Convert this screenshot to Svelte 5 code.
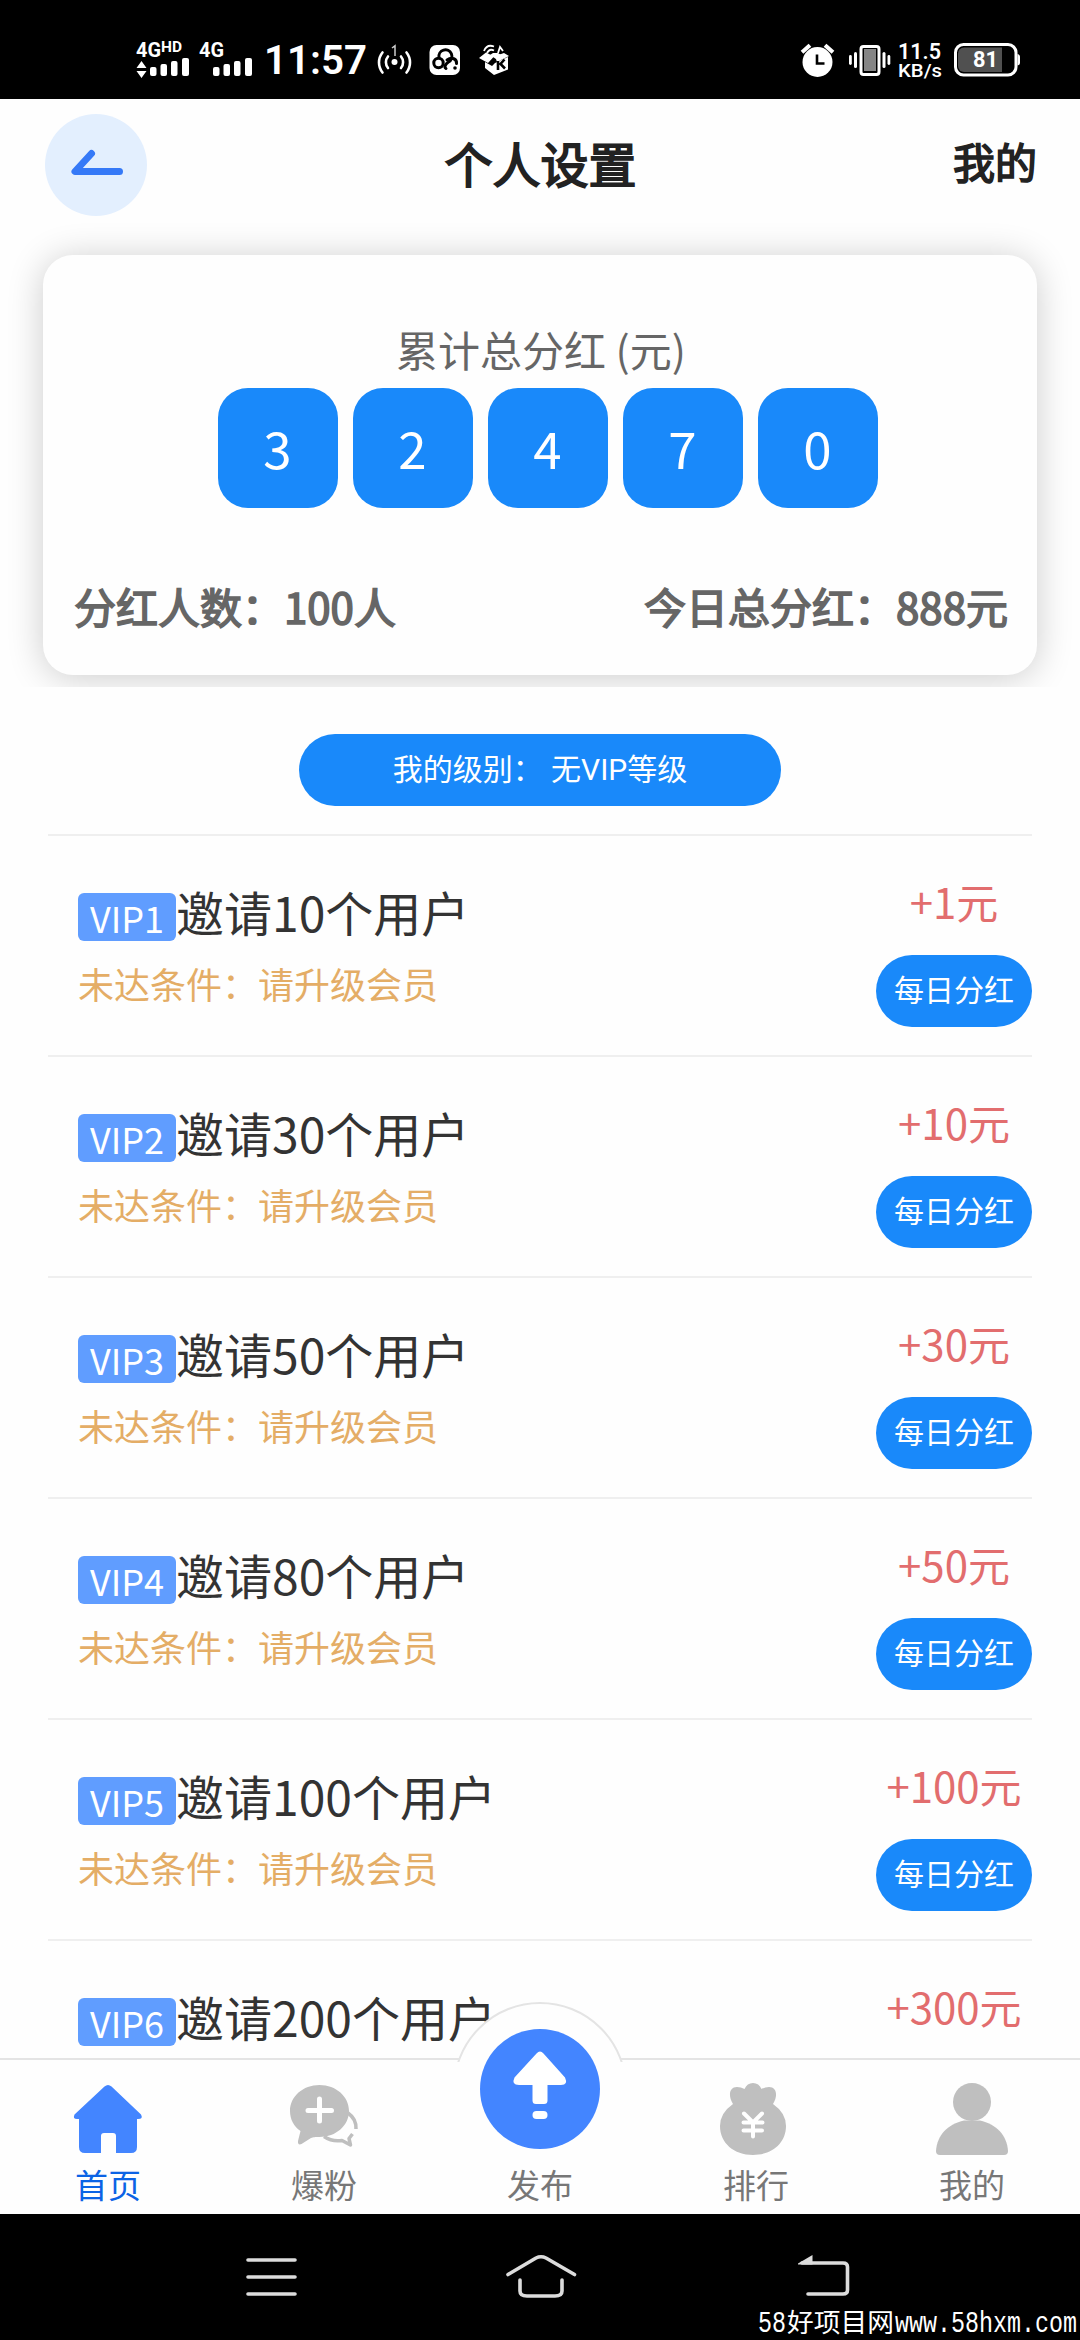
<script>
  const digits = ['3', '2', '4', '7', '0'];
  const levels = [
    { tag: 'VIP1', users: 10, bonus: 1 },
    { tag: 'VIP2', users: 30, bonus: 10 },
    { tag: 'VIP3', users: 50, bonus: 30 },
    { tag: 'VIP4', users: 80, bonus: 50 },
    { tag: 'VIP5', users: 100, bonus: 100 },
    { tag: 'VIP6', users: 200, bonus: 300 }
  ];
</script>

<div class="phone">
  <header class="status">
    <svg width="1080" height="99" viewBox="0 0 1080 99" fill="#fff">
      <text class="st b" x="136" y="57" font-size="20.5" textLength="25" lengthAdjust="spacingAndGlyphs">4G</text>
      <text class="st b" x="161" y="52" font-size="14" textLength="21" lengthAdjust="spacingAndGlyphs">HD</text>
      <path d="M141.500 61l5 7h-10zM141.500 78l5-7h-10z" />
      <rect x="150" y="67" width="6.500" height="9" rx="2" />
      <rect x="160.500" y="64" width="6.500" height="12" rx="2" />
      <rect x="171" y="61" width="6.500" height="15" rx="2" />
      <rect x="182" y="58" width="7" height="18" rx="2" />
      <text class="st b" x="199" y="57" font-size="20.5" textLength="25" lengthAdjust="spacingAndGlyphs">4G</text>
      <rect x="213" y="67" width="6.500" height="9" rx="2" />
      <rect x="223.500" y="64" width="6.500" height="12" rx="2" />
      <rect x="234" y="61" width="6.500" height="15" rx="2" />
      <rect x="245" y="58" width="7" height="18" rx="2" />
      <text class="st sb" x="264" y="74" font-size="41" textLength="103" lengthAdjust="spacingAndGlyphs">11:57</text>
      <circle cx="394.500" cy="62" r="3" />
      <path d="M392 48l3-2.200V56" fill="none" stroke="#ccc" stroke-width="1.500" />
      <g fill="none" stroke="#fff" stroke-width="2.600" stroke-linecap="round">
        <path d="M388 56.500a9 9 0 0 0 0 11.500M401 56.500a9 9 0 0 1 0 11.500M382.500 52.500a16 16 0 0 0 0 20M406.500 52.500a16 16 0 0 1 0 20" />
      </g>
      <rect x="429.500" y="45" width="30.500" height="30" rx="7" />
      <g fill="none" stroke="#000" stroke-width="3" stroke-linecap="round">
        <circle cx="438.500" cy="63" r="4.700" />
        <path d="M439 57.500a6.500 6.500 0 1 1 9.500 4.500c-2.500 1.500-5 5-2.500 6.500" />
        <path d="M447 60c5-3.500 10-1 9.500 3.500" />
      </g>
      <circle cx="455" cy="68" r="1.800" fill="#000" />
      <path d="M485 62l7 4 3-3 13-6v12.500l-14 5.500-9-7zM479 58l7-5.500 8 4-6 6.500zM495 56l9-3 5 3-12 6z" />
      <path d="M484 51c2-5 6-6 10-4.500M487 53c1.500-3 4-4 7-2.500M498 53l2-6 3 4" fill="none" stroke="#fff" stroke-width="1.800" />
      <path d="M490 55l3-2h5l3 2-5 4z" />
      <path d="M498 61v9M504.500 59.500l-4 4.500 4.500 4.500" fill="none" stroke="#000" stroke-width="2.600" />

      <circle cx="817.500" cy="62" r="15" />
      <path d="M803.500 51l5-4.500M826.500 46.500l5 4.500" stroke="#fff" stroke-width="4" stroke-linecap="square" />
      <path d="M817 54.500v9h7.500" fill="none" stroke="#000" stroke-width="2.600" />
      <rect x="861" y="46.500" width="18" height="28" rx="2.500" fill="#000" stroke="#fff" stroke-width="3" />
      <rect x="864" y="49" width="12" height="22" fill="#858585" />
      <rect x="854" y="52" width="3" height="16" rx="1.500" />
      <rect x="849" y="55" width="2.800" height="10" rx="1.400" />
      <rect x="882.500" y="52" width="3" height="16" rx="1.500" />
      <rect x="887.500" y="55" width="2.800" height="10" rx="1.400" />
      <text class="st sb" x="898" y="59" font-size="22.5" textLength="43" lengthAdjust="spacingAndGlyphs">11.5</text>
      <text class="st md" x="898" y="77" font-size="18.7" textLength="44" lengthAdjust="spacingAndGlyphs">KB/s</text>
      <rect x="955.500" y="44.500" width="60.500" height="30.500" rx="8" fill="#000" stroke="#fff" stroke-width="3" />
      <path d="M964 47.500h38v24.500h-38a6 6 0 0 1-6-6v-12.500a6 6 0 0 1 6-6z" fill="#505050" />
      <path d="M1017.500 54c2 .5 2.500 1.500 2.500 3v5.500c0 1.500-.5 2.500-2.500 3z" />
      <text class="st b" x="973" y="67" font-size="21.5" textLength="25" lengthAdjust="spacingAndGlyphs">81</text>
    </svg>
  </header>

  <main class="page">
    <section class="top">
      <div class="titlebar">
        <button class="back" aria-label="返回">
          <svg width="102" height="102" viewBox="0 0 102 102">
            <path d="M46.500 39.500L30 57.500H74.500" fill="none" stroke="#3579f7" stroke-width="7" stroke-linecap="round" stroke-linejoin="round" />
          </svg>
        </button>
        <h1>个人设置</h1>
        <span class="mine">我的</span>
      </div>
      <div class="card">
        <p class="caption">累计总分红 (元)</p>
        <div class="digits">
          {#each digits as d}<span>{d}</span>{/each}
        </div>
        <div class="stats"><span>分红人数：100人</span><span>今日总分红：888元</span></div>
      </div>
    </section>

    <div class="level">我的级别： 无VIP等级</div>

    <ul class="list">
      {#each levels as l}
        <li>
          <div class="info">
            <div class="goal"><span class="tag">{l.tag}</span><span>邀请{l.users}个用户</span></div>
            <p class="hint">未达条件：请升级会员</p>
          </div>
          <div class="reward">
            <span class="amount">+{l.bonus}元</span>
            <span class="daily">每日分红</span>
          </div>
        </li>
      {/each}
    </ul>
  </main>

  <nav class="tabs">
    <div class="bump"></div>
    <div class="tab active">
      <svg width="72" height="72" viewBox="0 0 72 72" fill="#4385ff">
        <path d="M32.500 3.500Q36 .5 39.500 3.500L69 31.500Q71.500 36 66 36H65V64Q65 70 59 70H44V53Q44 50 41 50H32Q29 50 29 53V70H13Q7 70 7 64V36H5Q.5 36 2.500 31.500Z" />
      </svg>
      <span>首页</span>
    </div>
    <div class="tab">
      <svg width="72" height="72" viewBox="0 0 72 72">
        <path d="M31.500 2C48 2 61 13.500 61 28S48 54 31.500 54C27 54 25.500 54 23 55L13.500 61Q9.500 62.500 10 58L12.500 48C6 43.500 2 36.500 2 28 2 13.500 15 2 31.500 2z" fill="#bfbfbf" />
        <path d="M31.500 16V38M20 27.500H43.500" stroke="#fff" stroke-width="5" stroke-linecap="round" />
        <path d="M60 30Q68.500 36 68 46M36 53.500Q44 59 54 57.500L62.500 62 61 55.500 64.500 51" fill="none" stroke="#bfbfbf" stroke-width="3.500" stroke-linejoin="round" stroke-linecap="butt" />
      </svg>
      <span>爆粉</span>
    </div>
    <div class="tab publish">
      <div class="disc">
        <svg width="120" height="120" viewBox="0 0 120 120" fill="#fff">
          <path d="M56.500 24.500Q60 20.500 63.500 24.500L85 48.500Q88.500 56 81 56H67.500V71.500Q67.500 75 64 75H56Q52.500 75 52.500 71.500V56H39Q31 56 34.500 48.500Z" />
          <rect x="52.500" y="82" width="15" height="8" rx="4" />
        </svg>
      </div>
      <span>发布</span>
    </div>
    <div class="tab">
      <svg class="bag" width="72" height="72" viewBox="0 0 72 72">
        <path d="M16 21C11 13 12 4 20 4Q24 4 27.500 6Q30 0 36 0T44.500 6Q48 4 52 4C60 4 61 13 56 21Q69 30 69 43C69 60 55 72 36 72S3 60 3 43Q3 30 16 21z" fill="#bfbfbf" />
        <path d="M27 30.500L36 39.500 45 30.500M36 39V53.500M26.500 39.500H45.500M26.500 47.500H45" fill="none" stroke="#fff" stroke-width="4" stroke-linecap="round" />
      </svg>
      <span>排行</span>
    </div>
    <div class="tab">
      <svg width="72" height="72" viewBox="0 0 72 72" fill="#bfbfbf">
        <circle cx="36" cy="19" r="19" />
        <path d="M28 37.500H44C60 41 71 52 72 68Q72 72 68 72H4Q0 72 0 68C1 52 12 41 28 37.500z" />
      </svg>
      <span>我的</span>
    </div>
  </nav>

  <footer class="system">
    <svg width="1080" height="126" viewBox="0 0 1080 126">
      <g fill="none" stroke="#dcdcdc" stroke-width="3.600" stroke-linecap="round" stroke-linejoin="round">
        <path d="M248 46H295M248 63H295M248 80H295" />
        <path d="M508 60.500L536 44Q541 41.500 546 44L574.500 60.500" />
        <path d="M520 66V77Q520 82 527 82H555Q562 82 562 77V66" />
        <path d="M802 49H843Q847.500 49 847.500 53V76Q847.500 80 843 80H808" />
      </g>
      <path d="M798 49.500L812.500 41V50.500H798z" fill="#dcdcdc" />
      <g fill="#fff" class="mark">
        <text class="mono" x="758" y="118" font-size="29" textLength="28" lengthAdjust="spacingAndGlyphs">58</text>
        <text class="cjk" x="787" y="118" font-size="26" textLength="107" lengthAdjust="spacingAndGlyphs">好项目网</text>
        <text class="mono" x="895" y="118" font-size="29" textLength="182" lengthAdjust="spacingAndGlyphs">www.58hxm.com</text>
      </g>
    </svg>
  </footer>
</div>

<style>
  :global(body) { margin: 0; background: #fff; }
  .phone {
    width: 1080px; height: 2340px; overflow: hidden;
    display: flex; flex-direction: column;
    font-family: "Noto Sans CJK SC", sans-serif; color: #333; background: #fefefe;
  }
  svg { display: block; }
  .status { flex: none; height: 99px; background: #000; }
  .st { font-family: Roboto, sans-serif; }
  .b { font-weight: 700; }
  .sb { font-weight: 600; }
  .md { font-weight: 500; }

  .page { flex: 1; min-height: 0; overflow: hidden; }
  .top { height: 588px; overflow: hidden; box-sizing: border-box; }
  .titlebar {
    display: grid; grid-template-columns: 1fr auto 1fr; align-items: center;
    height: 132px; padding: 0 44px 0 45px; color: #222;
  }
  .back { width: 102px; height: 102px; padding: 0; border: 0; border-radius: 50%; background: #e3effe; }
  h1 { margin: 0; padding-bottom: 6px; font-size: 48px; line-height: 66px; font-weight: 400; -webkit-text-stroke: 1.8px #222; }
  .mine { justify-self: end; font-size: 42px; line-height: 60px; -webkit-text-stroke: 1.6px #222; padding-bottom: 8px; margin-right: -1px; }

  .card {
    box-sizing: border-box; width: 994px; height: 420px; margin: 24px 43px 0;
    padding: 61px 29px 0 31px; border-radius: 30px; background: #fefefe;
    box-shadow: 0 3px 36px rgba(0, 0, 0, .2); color: #666;
  }
  .caption { margin: 0; text-align: center; font-size: 42px; line-height: 66px; }
  .digits { display: flex; justify-content: center; margin: 6px 0 0 13px; gap: 15px; }
  .digits span {
    width: 120px; height: 120px; border-radius: 30px; background: #1989fa; color: #fff;
    font-size: 51px; line-height: 119px; text-align: center;
  }
  .stats { display: flex; justify-content: space-between; margin-top: 68px; font-size: 42px; line-height: 60px; -webkit-text-stroke: 1.6px #666; }

  .level {
    width: 482px; height: 72px; margin: 47px auto 28px; border-radius: 36px;
    background: #1989fa; color: #fff; text-align: center; font-size: 30px; line-height: 71px;
    font-family: Roboto, "Noto Sans CJK SC", sans-serif; word-spacing: 1px;
  }
  .list { list-style: none; margin: 0; padding: 0 48px; }
  li {
    box-sizing: border-box; height: 221px; padding-left: 30px; border-top: 2px solid #efefef;
    display: flex; justify-content: space-between;
  }
  .goal { display: flex; margin-top: 42px; font-size: 48px; line-height: 66px; }
  .tag {
    box-sizing: border-box; width: 98px; height: 48px; margin-top: 15px; border-radius: 6px;
    background: #609dff; color: #fff; text-align: center; font-size: 36px; line-height: 48px;
  }
  .hint { margin: 12px 0 0; font-size: 36px; line-height: 54px; color: #e4ad66; }
  .reward { width: 156px; display: flex; flex-direction: column; align-items: center; }
  .amount { margin-top: 34px; height: 85px; font-size: 42px; line-height: 62px; color: #e26d6e; white-space: nowrap; }
  .daily { width: 156px; height: 72px; border-radius: 36px; background: #1989fa; color: #fff; text-align: center; font-size: 30px; line-height: 66px; }

  .tabs {
    position: relative; flex: none; box-sizing: border-box; height: 156px;
    display: flex; border-top: 2px solid #e4e4e4; background: #fefefe;
  }
  .bump {
    position: absolute; left: 453px; top: -58px; width: 174px; height: 60px; overflow: hidden;
  }
  .bump::before {
    content: ""; display: block; box-sizing: border-box; width: 174px; height: 174px;
    border: 2px solid #e4e4e4; border-radius: 50%; background: #fefefe;
  }
  .tab { flex: 1; display: flex; flex-direction: column; align-items: center; padding-top: 23px; color: #777; }
  .tab span { margin-top: 5px; font-size: 33px; line-height: 48px; }
  .tab.active span { color: #0b63e5; }
  .bag { margin-right: 6px; }
  .publish { position: relative; }
  .disc { width: 120px; height: 120px; margin-top: -54px; border-radius: 50%; background: #4385ff; }
  .publish span { margin-top: 11px; }

  .system { flex: none; height: 126px; background: #000; }
  .mark .cjk { font-family: "Noto Sans CJK SC", sans-serif; }
  .mark .mono { font-family: "Liberation Mono", monospace; }
</style>
